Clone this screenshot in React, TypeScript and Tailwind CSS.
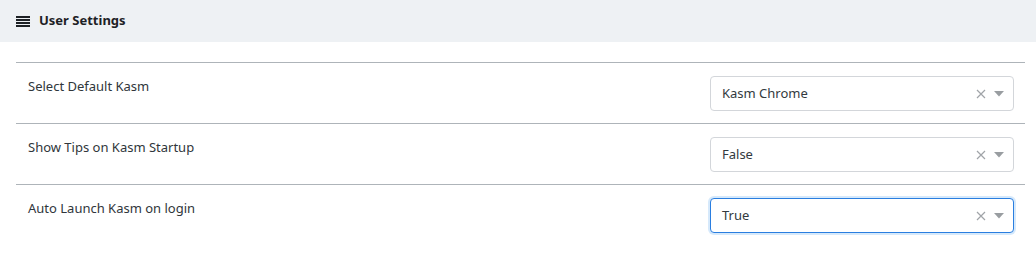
import React from 'react';

type Setting = { label: string; value: string; focused?: boolean };

const settings: Setting[] = [
  { label: 'Select Default Kasm', value: 'Kasm Chrome' },
  { label: 'Show Tips on Kasm Startup', value: 'False' },
  { label: 'Auto Launch Kasm on login', value: 'True', focused: true },
];

const SelectBox: React.FC<{ value: string; focused?: boolean }> = ({ value, focused }) => (
  <div
    className={
      'w-[304px] h-[35px] bg-white rounded-[4px] flex items-center pl-[11px] pr-[9px] ' +
      (focused
        ? 'border border-[#2a7ee0] shadow-[0_0_0_2px_#d6e9fb]'
        : 'border border-[#d3d6da]')
    }
  >
    <span className="flex-1 text-[13px] text-[#333a40]">{value}</span>
    {/* clear */}
    <svg width="10" height="10" viewBox="0 0 10 10" className="mr-[8px]">
      <path d="M1 1L9 9M9 1L1 9" stroke="#a0a4a8" strokeWidth="1.2" />
    </svg>
    {/* dropdown caret */}
    <svg width="10" height="6" viewBox="0 0 10 6">
      <path d="M0 0H10L5 5.5Z" fill="#999da1" />
    </svg>
  </div>
);

export default function App() {
  return (
    <div className="w-[1036px] h-[266px] bg-white font-['Noto_Sans','Open_Sans',sans-serif] text-[#2d3338]">
      <header className="h-[42px] bg-[#eef1f4] flex items-center pl-[16px] gap-[9px]">
        <svg width="14" height="11" viewBox="0 0 14 11">
          <rect x="0" y="0" width="14" height="2" fill="#1d2125" />
          <rect x="0" y="3" width="14" height="2" fill="#1d2125" />
          <rect x="0" y="6" width="14" height="2" fill="#1d2125" />
          <rect x="0" y="9" width="14" height="2" fill="#1d2125" />
        </svg>
        <span className="text-[13px] font-bold text-[#1d2125]">User Settings</span>
      </header>

      <div className="pt-[20px] pl-[16px] pr-[11px]">
        {settings.map((s) => (
          <div
            key={s.label}
            className="border-t border-[#aeb4b9] h-[61px] flex items-start justify-between pl-[12px] pr-[11px]"
          >
            <span className="text-[13px] mt-[14px] text-[#30363b]">{s.label}</span>
            <div className="mt-[13px]">
              <SelectBox value={s.value} focused={s.focused} />
            </div>
          </div>
        ))}
      </div>
    </div>
  );
}
